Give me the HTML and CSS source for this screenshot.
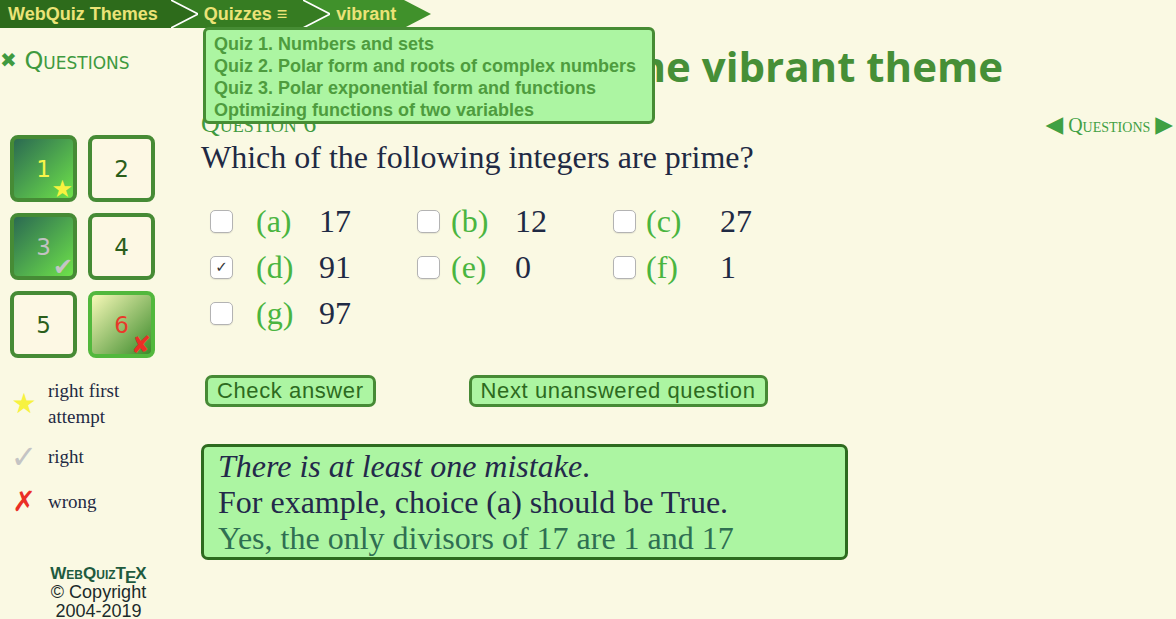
FILE: index.html
```html
<!DOCTYPE html>
<html lang="en">
<head>
<meta charset="UTF-8" />
<meta name="viewport" content="width=device-width, initial-scale=1" />
<title>The vibrant theme</title>
<link rel="stylesheet" href="styles.css">
</head>
<body>

<header class="crumbs">
  <div class="crumb crumb-1">WebQuiz Themes</div>
  <svg class="sep" width="27" height="28" viewBox="0 0 27 28">
    <rect width="27" height="28" fill="#367c22"/>
    <polygon points="0,0 27,14 0,28" fill="#2d6b1b"/>
    <polyline points="0,0 27,14 0,28" fill="none" stroke="#fff" stroke-width="1.6"/>
  </svg>
  <div class="crumb crumb-2">Quizzes &equiv;</div>
  <svg class="sep" width="27" height="28" viewBox="0 0 27 28">
    <rect width="27" height="28" fill="#40912b"/>
    <polygon points="0,0 27,14 0,28" fill="#367c22"/>
    <polyline points="0,0 27,14 0,28" fill="none" stroke="#fff" stroke-width="1.6"/>
  </svg>
  <div class="crumb crumb-3">vibrant</div>
  <svg class="sep" width="27" height="28" viewBox="0 0 27 28">
    <polygon points="0,0 27,14 0,28" fill="#40912b"/>
  </svg>

  <ul class="quiz-menu">
    <li>Quiz 1. Numbers and sets</li>
    <li>Quiz 2. Polar form and roots of complex numbers</li>
    <li>Quiz 3. Polar exponential form and functions</li>
    <li>Optimizing functions of two variables</li>
  </ul>
</header>

<div class="page">
  <aside class="sidebar">
    <div class="side-title"><span class="close">&#10006;</span> Questions</div>

    <div class="tiles">
      <div class="tile tile-first">1<span class="badge star">&#9733;</span></div>
      <div class="tile">2</div>
      <div class="tile tile-right">3<span class="badge tick">&#10004;</span></div>
      <div class="tile">4</div>
      <div class="tile">5</div>
      <div class="tile tile-wrong">6<span class="badge cross">&#10008;</span></div>
    </div>

    <div class="legend">
      <span class="legend-icon star">&#9733;</span>
      <span class="legend-text">right first<br>attempt</span>
      <span class="legend-icon tick">&#10003;</span>
      <span class="legend-text">right</span>
      <span class="legend-icon cross">&#10007;</span>
      <span class="legend-text">wrong</span>
    </div>

    <div class="footer">
      <div class="logo">WebQuiz<span class="tex">T<span class="tex-e">E</span>X</span></div>
      <div>&copy; Copyright</div>
      <div>2004-2019</div>
    </div>
  </aside>

  <main class="main">
    <h1 class="title">The vibrant theme</h1>

    <div class="q-head">
      <span class="q-num">Question 6</span>
      <span class="q-nav"><span class="tri">&#9664;</span> Questions <span class="tri">&#9654;</span></span>
    </div>

    <p class="question">Which of the following integers are prime?</p>

    <div class="choices">
      <span class="box"></span><span class="lbl">(a)</span><span class="val">17</span>
      <span class="box"></span><span class="lbl">(b)</span><span class="val">12</span>
      <span class="box"></span><span class="lbl">(c)</span><span class="val">27</span>
      <span class="box checked">&#10003;</span><span class="lbl">(d)</span><span class="val">91</span>
      <span class="box"></span><span class="lbl">(e)</span><span class="val">0</span>
      <span class="box"></span><span class="lbl">(f)</span><span class="val">1</span>
      <span class="box"></span><span class="lbl">(g)</span><span class="val">97</span>
    </div>

    <div class="buttons">
      <button class="btn btn-check">Check answer</button>
      <button class="btn btn-next">Next unanswered question</button>
    </div>

    <div class="feedback">
      <div class="fb-mistake"><em>There is at least one mistake</em>.</div>
      <div>For example, choice (a) should be True.</div>
      <div class="fb-hint">Yes, the only divisors of 17 are 1 and 17</div>
    </div>
  </main>
</div>

</body>
</html>
```

FILE: styles.css
```css
body {
  margin: 0;
  background: #faf9e3;
  color: #1f2a44;
  font-family: "Liberation Serif", serif;
}

/* breadcrumb bar */
.crumbs {
  position: relative;
  display: flex;
  height: 28px;
  font-family: "Liberation Sans", Arial, sans-serif;
  font-weight: bold;
  font-size: 18px;
  line-height: 28px;
  color: #ebe377;
  z-index: 2;
}
.crumb {
  height: 28px;
}
.crumb-1 {
  background: #2d6b1b;
  padding: 0 13px 0 8px;
}
.crumb-2 {
  background: #367c22;
  padding: 0 16px 0 6px;
}
.crumb-3 {
  background: #40912b;
  padding: 0 8px 0 6px;
}
.sep {
  display: block;
  flex: none;
}
.quiz-menu {
  position: absolute;
  top: 27px;
  left: 203px;
  width: 452px;
  box-sizing: border-box;
  margin: 0;
  padding: 3px 8px 0;
  list-style: none;
  background: #acf5a2;
  border: 3px solid #468c34;
  border-radius: 6px;
  color: #4e9c3e;
  font-size: 18px;
  line-height: 22px;
}

/* layout */
.page {
  display: flex;
}
.sidebar {
  width: 201px;
  flex: none;
}
.main {
  flex: 1;
  padding: 14px 3px 0 0;
}

/* sidebar */
.side-title {
  margin-top: 17px;
  font-family: "DejaVu Sans", sans-serif;
  font-size: 24px;
  line-height: 30px;
  font-variant: small-caps;
  color: #3f9a40;
}
.close {
  font-size: 20px;
  vertical-align: 2px;
}
.tiles {
  display: grid;
  grid-template-columns: 67px 67px;
  gap: 11px;
  margin: 59px 0 0 10px;
}
.tile {
  position: relative;
  height: 67px;
  box-sizing: border-box;
  border: 4px solid #468b35;
  border-radius: 8px;
  background: #fdf8e4;
  display: flex;
  align-items: center;
  justify-content: center;
  font-family: "DejaVu Sans", sans-serif;
  font-size: 23px;
  color: #2b5e1a;
}
.tile-first {
  background: linear-gradient(135deg, #2b6a52, #6ee24a);
  color: #f7f54a;
}
.tile-right {
  background: linear-gradient(135deg, #2b6a52, #6ee24a);
  color: #c2c2c2;
}
.tile-wrong {
  background: linear-gradient(135deg, #f7f9b8, #3b8a2a);
  border-color: #52b83d;
  color: #e83a2a;
}
.badge {
  position: absolute;
  right: 0;
  bottom: -3px;
  font-size: 24px;
  line-height: 24px;
}
.badge.star {
  color: #f7f240;
}
.badge.tick {
  color: #c4c4c4;
}
.badge.cross {
  color: #ea2f26;
}

.legend {
  display: grid;
  grid-template-columns: 48px auto;
  row-gap: 14px;
  align-items: center;
  margin-top: 20px;
}
.legend-icon {
  text-align: center;
  font-family: "DejaVu Sans", sans-serif;
  font-size: 28px;
  line-height: 26px;
}
.legend-icon.star {
  color: #f7f240;
}
.legend-icon.tick {
  color: #c4c4c4;
  font-size: 32px;
}
.legend-icon.cross {
  color: #ea2f26;
  font-size: 28px;
  margin-top: 5px;
}
.legend-text {
  font-size: 19px;
  line-height: 26px;
}
.legend-text:last-child {
  margin-top: 5px;
}

.footer {
  width: 197px;
  margin-top: 49px;
  text-align: center;
  font-family: "Liberation Sans", Arial, sans-serif;
  font-size: 18px;
  line-height: 19px;
  color: #1c2b2b;
}
.logo {
  font-weight: bold;
  font-variant: small-caps;
  font-size: 17px;
  color: #1e5b3f;
}
.tex-e {
  position: relative;
  top: 4px;
  margin: 0 -1px;
}

/* main */
.title {
  margin: 0;
  padding-right: 170px;
  text-align: right;
  font-family: "Open Sans", sans-serif;
  font-weight: 700;
  font-size: 42px;
  line-height: 48px;
  color: #468f37;
}
.q-head {
  display: flex;
  justify-content: space-between;
  align-items: baseline;
  margin-top: 21px;
  line-height: 26px;
  font-variant: small-caps;
  color: #3f9a3f;
}
.q-num {
  font-size: 26px;
}
.q-nav {
  font-size: 20px;
  color: #3fa043;
}
.tri {
  font-family: "DejaVu Sans", sans-serif;
  font-size: 23px;
}
.question {
  margin: 1px 0 0;
  font-size: 32px;
  line-height: 36px;
}
.choices {
  display: grid;
  grid-template-columns: 46px 63px 98px 34px 64px 98px 33px 74px auto;
  grid-auto-rows: 46px;
  align-items: center;
  margin: 23px 0 0 9px;
  font-size: 32px;
}
.box {
  width: 23px;
  height: 23px;
  box-sizing: border-box;
  border: 1px solid #b3b3b3;
  border-radius: 5px;
  background: #fff;
  box-shadow: 0 1px 1px rgba(0, 0, 0, 0.08);
  font-family: "DejaVu Sans", sans-serif;
  font-size: 15px;
  font-weight: bold;
  line-height: 21px;
  text-align: center;
  color: #333;
}
.lbl {
  color: #4ab540;
}
.buttons {
  display: flex;
  gap: 93px;
  margin: 39px 0 0 4px;
}
.btn {
  height: 32px;
  padding: 0 9px;
  background: #acf5a2;
  border: 3px solid #468a35;
  border-radius: 7px;
  font-family: "Liberation Sans", Arial, sans-serif;
  font-size: 22px;
  letter-spacing: 0.6px;
  line-height: 26px;
  color: #2d6a20;
}
.feedback {
  width: 647px;
  box-sizing: border-box;
  margin-top: 37px;
  padding: 1px 14px 1px;
  background: #acf5a2;
  border: 3px solid #2d6b1f;
  border-radius: 7px;
  font-size: 32px;
  line-height: 36px;
  color: #23294a;
}
.fb-hint {
  color: #2f6f52;
}
```
